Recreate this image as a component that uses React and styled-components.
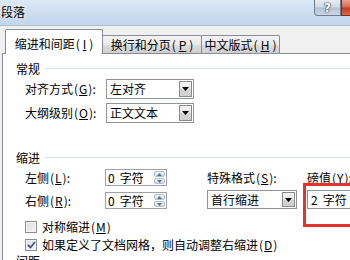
import React from "react";
import styled, { createGlobalStyle } from "styled-components";

const GlobalStyle = createGlobalStyle`
  html, body { margin: 0; padding: 0; }
  body {
    width: 350px; height: 260px; overflow: hidden; background: #f0f0f0;
    font-family: "Noto Sans CJK SC", "Noto Sans", sans-serif;
    font-size: 12px; color: #000;
  }
`;

const Dialog = styled.div`
  width: 350px; height: 260px; overflow: hidden;
  display: flex; flex-direction: column;
  background: #f0f0f0;
`;

const TitleBar = styled.div`
  height: 25px; flex: none;
  display: flex; align-items: flex-start;
  background: linear-gradient(180deg, #dce9f7 0%, #cbdcef 60%, #c3d6ec 100%);
  border-bottom: 1px solid #aebfd3;
`;

const Title = styled.div`
  padding: 5px 0 0 1px; line-height: 14px;
  text-shadow: 0 0 5px rgba(255,255,255,0.95);
`;

const CaptionButtons = styled.div`
  margin-left: auto; display: flex;
`;

const HelpButton = styled.div`
  width: 27px; height: 16px; box-sizing: border-box;
  border: 1px solid #6f7d91; border-top: none; border-radius: 0 0 0 4px;
  background: linear-gradient(180deg, #e6ecf3 0%, #cfd9e5 48%, #b4c2d3 52%, #c9d5e3 100%);
  display: flex; align-items: center; justify-content: center;
  color: #fff; font: bold 12px "DejaVu Sans", sans-serif;
  text-shadow: 0 0 1px #34465c, 0 0 1px #34465c, 0 0 2px #34465c;
`;

const CloseButton = styled.div`
  width: 9px; height: 16px; box-sizing: border-box;
  border-left: 1px solid #7a2a1e; border-bottom: 1px solid #7a2a1e;
  background: linear-gradient(180deg, #e9a48f 0%, #d8694f 48%, #c23b22 52%, #d86a48 100%);
`;

const Body = styled.div`
  flex: 1; min-height: 0;
  padding: 3px 0 0 2px;
  display: flex; flex-direction: column;
`;

const TabStrip = styled.div`
  display: flex; align-items: flex-end;
  height: 25px; flex: none;
  padding-left: 3px;
  margin-bottom: -1px; position: relative; z-index: 1;
`;

const Tab = styled.div`
  box-sizing: border-box;
  width: ${p => p.$w}px;
  height: ${p => (p.$active ? 25 : 18)}px;
  margin-bottom: ${p => (p.$active ? 0 : 1)}px;
  margin-left: ${p => (p.$first ? 0 : -1)}px;
  padding-bottom: ${p => (p.$active ? 3 : 1)}px;
  border: 1px solid #898c95; border-bottom: none;
  border-radius: 2px 2px 0 0;
  background: ${p => (p.$active ? "#fff" : "linear-gradient(180deg, #f3f3f3 0%, #ebebeb 50%, #dddddd 51%, #cfcfcf 100%)")};
  display: flex; align-items: flex-end; justify-content: center;
  line-height: 14px; white-space: nowrap;
  position: relative; z-index: ${p => (p.$active ? 2 : 1)};
`;

const Key = styled.span`
  margin-left: 1px;
  & u { text-decoration: underline; margin: 0 ${p => (p.$wide ? 3 : 1)}px; }
`;

const Pane = styled.div`
  flex: 1; min-height: 0;
  background: #fff;
  border-top: 1px solid #898c95; border-left: 1px solid #898c95;
  padding: 0 0 0 13px;
  display: flex; flex-direction: column;
`;

const Section = styled.div`
  display: flex; align-items: center; flex: none;
  height: 14px; line-height: 14px;
  margin-top: ${p => p.$mt}px;
  &::after {
    content: ""; flex: 1; margin: 0 0 2px 5px;
    border-top: 1px solid #d5dfe5;
  }
`;

const FieldRow = styled.div`
  display: flex; align-items: center; flex: none;
  margin: ${p => p.$mt}px 0 0 9px;
`;

const Label = styled.div`
  width: ${p => (p.$w ? `${p.$w}px` : "auto")};
  line-height: 14px; white-space: nowrap;
  align-self: center;
`;

const Select = styled.div`
  box-sizing: border-box;
  width: ${p => p.$w}px; height: ${p => p.$h}px;
  border: 1px solid #8f939a;
  background: #fff;
  display: flex; align-items: center;
  padding: 0 1px 0 3px;
  line-height: 14px;
  ${p => p.$shift && `margin-top: -2px; align-self: start;`}
`;

const SelectText = styled.span`
  flex: 1;
`;

const Unit = styled.span`
  margin-left: 5px;
`;

const ArrowButton = styled.div`
  box-sizing: border-box;
  width: 13px; height: calc(100% - 2px);
  border: 1px solid #8a8a8a;
  background: linear-gradient(180deg, #f4f4f4 0%, #e6e6e6 50%, #d6d6d6 51%, #cfcfcf 100%);
  display: flex; align-items: center; justify-content: center;
`;

const IndentGrid = styled.div`
  display: grid; flex: none;
  grid-template-columns: 80px 62px 40px 90px 10px 60px;
  grid-template-rows: 17px 17px;
  row-gap: 6px;
  margin: 4px 0 0 9px;
`;

const Spin = styled.div`
  box-sizing: border-box;
  height: 17px;
  border: 1px solid #9ea2a8;
  background: #fff;
  display: flex; align-items: center;
  padding: 0 1px 0 2px;
  line-height: 14px;
`;

const SpinButtons = styled.div`
  display: flex; flex-direction: column; gap: 1px;
  width: 11px; height: 13px;
`;

const SpinHalf = styled.div`
  flex: 1; box-sizing: border-box;
  border: 1px solid #b4bfcc; border-radius: 2px;
  background: linear-gradient(180deg, #eef2f7 0%, #d5dee9 100%);
  display: flex; align-items: center; justify-content: center;
`;

const ValueCell = styled.div`
  position: relative;
  margin-top: -2px; align-self: start;
`;

const ValueBox = styled.div`
  box-sizing: border-box;
  height: 19px; width: 60px;
  border: 1px solid #8f939a; border-right: none;
  background: #fff;
  display: flex; align-items: center;
  padding-left: 3px; line-height: 14px;
`;

const Highlight = styled.div`
  position: absolute;
  left: -4px; top: -7px;
  width: 60px; height: 44px;
  box-sizing: border-box;
  border: 3px solid #e5322e; border-right: none;
  pointer-events: none;
`;

const CheckRow = styled.div`
  display: flex; align-items: center; flex: none;
  height: 14px;
  margin: ${p => p.$mt}px 0 0 9px;
  line-height: 14px; white-space: nowrap;
`;

const Box = styled.div`
  box-sizing: border-box;
  width: 12px; height: 12px; margin-right: 5px; flex: none;
  border: 1px solid #8e8f8f;
  background: linear-gradient(135deg, #dcdcdc 0%, #f6f6f6 100%);
  box-shadow: inset 0 0 0 1px #f4f4f4;
  display: flex; align-items: center; justify-content: center;
`;

function HK({ k, colon, wide }) {
  return (
    <Key $wide={wide}>
      (<u>{k}</u>){colon ? ":" : ""}
    </Key>
  );
}

function DownArrow() {
  return (
    <svg width="7" height="4" viewBox="0 0 7 4">
      <path d="M0 0H7L3.5 4Z" fill="#000" />
    </svg>
  );
}

function SpinControl({ value }) {
  return (
    <Spin>
      <SelectText>
        {value}
        <Unit>字符</Unit>
      </SelectText>
      <SpinButtons>
        <SpinHalf>
          <svg width="5" height="3" viewBox="0 0 5 3">
            <path d="M0 3L2.5 0L5 3Z" fill="#5a6f8c" />
          </svg>
        </SpinHalf>
        <SpinHalf>
          <svg width="5" height="3" viewBox="0 0 5 3">
            <path d="M0 0H5L2.5 3Z" fill="#5a6f8c" />
          </svg>
        </SpinHalf>
      </SpinButtons>
    </Spin>
  );
}

export default function App() {
  return (
    <>
      <GlobalStyle />
      <Dialog>
        <TitleBar>
          <Title>段落</Title>
          <CaptionButtons>
            <HelpButton>?</HelpButton>
            <CloseButton />
          </CaptionButtons>
        </TitleBar>
        <Body>
          <TabStrip>
            <Tab $active $first $w={98}>
              缩进和间距<HK k="I" wide />
            </Tab>
            <Tab $w={100}>
              换行和分页<HK k="P" wide />
            </Tab>
            <Tab $w={79}>
              中文版式<HK k="H" wide />
            </Tab>
          </TabStrip>
          <Pane>
            <Section $mt={8}>常规</Section>
            <FieldRow $mt={3}>
              <Label $w={81}>
                对齐方式<HK k="G" colon />
              </Label>
              <Select $w={88} $h={20}>
                <SelectText>左对齐</SelectText>
                <ArrowButton>
                  <DownArrow />
                </ArrowButton>
              </Select>
            </FieldRow>
            <FieldRow $mt={4}>
              <Label $w={81}>
                大纲级别<HK k="O" colon />
              </Label>
              <Select $w={88} $h={20}>
                <SelectText>正文文本</SelectText>
                <ArrowButton>
                  <DownArrow />
                </ArrowButton>
              </Select>
            </FieldRow>

            <Section $mt={28}>缩进</Section>
            <IndentGrid>
              <Label>
                左侧<HK k="L" colon />
              </Label>
              <SpinControl value="0" />
              <span />
              <Label>
                特殊格式<HK k="S" colon />
              </Label>
              <span />
              <Label>
                磅值<HK k="Y" colon />
              </Label>

              <Label>
                右侧<HK k="R" colon />
              </Label>
              <SpinControl value="0" />
              <span />
              <Select $w={90} $h={19} $shift>
                <SelectText>首行缩进</SelectText>
                <ArrowButton>
                  <DownArrow />
                </ArrowButton>
              </Select>
              <span />
              <ValueCell>
                <ValueBox>
                  2<Unit>字符</Unit>
                </ValueBox>
                <Highlight />
              </ValueCell>
            </IndentGrid>

            <CheckRow $mt={11}>
              <Box />
              对称缩进<HK k="M" />
            </CheckRow>
            <CheckRow $mt={4}>
              <Box>
                <svg width="9" height="8" viewBox="0 0 9 8">
                  <path d="M1 4L3.5 6.5L8 1" fill="none" stroke="#3f5590" strokeWidth="1.8" />
                </svg>
              </Box>
              如果定义了文档网格，则自动调整右缩进<HK k="D" />
            </CheckRow>
            <Section $mt={2}>间距</Section>
          </Pane>
        </Body>
      </Dialog>
    </>
  );
}
